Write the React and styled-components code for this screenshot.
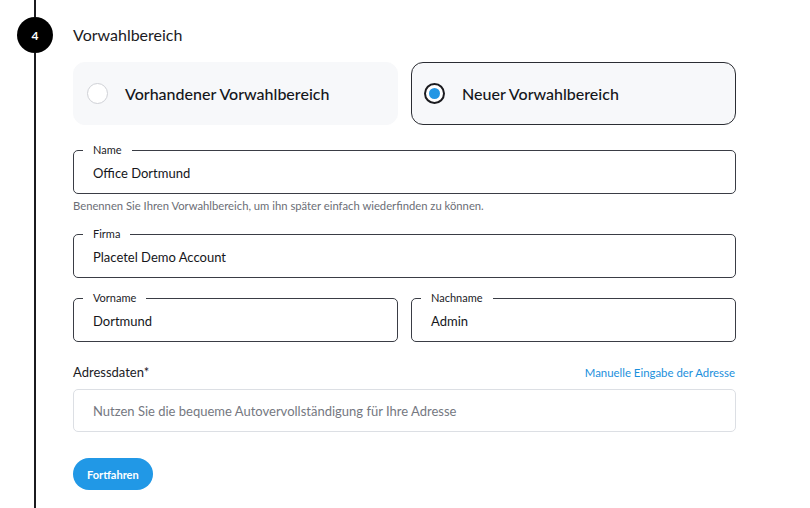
import styled, { createGlobalStyle } from "styled-components";

/* ===== GLOBAL ===== */

const Global = createGlobalStyle`
html, body {
margin:0;
padding:0;
background:#fff;
}
body{
font-family:Lato, "Open Sans", "Liberation Sans", sans-serif;
color:#1b1b1f;
}
`;

/* ===== LAYOUT ===== */

const Page = styled.div`
display:flex;
width:810px;
height:508px;
overflow:hidden;
`;

const Rail = styled.div`
width:70px;
display:flex;
flex-direction:column;
align-items:center;
`;

const RailLine = styled.div`
width:2px;
background:#1b1b1f;
height:${p => p.$h ? p.$h + "px" : "auto"};
flex:${p => p.$grow ? 1 : "none"};
`;

const StepBadge = styled.div`
width:36px;
height:36px;
border-radius:50%;
background:#000;
color:#fff;
font-size:12px;
font-weight:700;
display:flex;
align-items:center;
justify-content:center;
`;

const Content = styled.div`
width:663px;
margin-left:3px;
padding-top:24px;
display:flex;
flex-direction:column;
`;

const Title = styled.div`
font-size:16px;
line-height:22px;
color:#1b1b1f;
margin-bottom:16px;
`;

/* ===== OPTIONS ===== */

const Options = styled.div`
display:grid;
grid-template-columns:1fr 1fr;
gap:13px;
margin-bottom:25px;
`;

const Option = styled.div`
height:63px;
box-sizing:border-box;
border-radius:12px;
background:#f7f8fa;
border:1px solid ${p => p.$active ? "#2b2d33" : "#f7f8fa"};
display:flex;
align-items:center;
padding-left:${p => p.$active ? "12px" : "13px"};
gap:17px;
font-size:16px;
font-weight:500;
color:#15161a;
`;

const Radio = styled.span`
width:21px;
height:21px;
box-sizing:border-box;
border-radius:50%;
border:${p => p.$active ? "2px solid #1b1b1f" : "1.5px solid #cfd1d6"};
background:#fff;
display:flex;
align-items:center;
justify-content:center;

&::after{
content:"";
display:${p => p.$active ? "block" : "none"};
width:11px;
height:11px;
border-radius:50%;
background:#2396e4;
}
`;

/* ===== FIELDS ===== */

const Field = styled.div`
position:relative;
height:44px;
box-sizing:border-box;
border:1.5px solid #3a3d45;
border-radius:5px;
padding:0 19px;
display:flex;
align-items:center;
min-width:0;
`;

const FieldLabel = styled.span`
position:absolute;
top:-8px;
left:9px;
font-size:11px;
line-height:14px;
padding:0 10px;
background:#fff;
color:#1b1b1f;
`;

const Value = styled.div`
font-size:13px;
color:#15161a;
margin-top:2px;
`;

const Help = styled.div`
font-size:11.25px;
line-height:14px;
color:#6b6e76;
margin-top:5px;
margin-bottom:21px;
`;

const Row = styled.div`
display:grid;
grid-template-columns:1fr 1fr;
gap:13px;
margin-top:${p => p.$mt || 0}px;
`;

const AddressHead = styled.div`
display:flex;
justify-content:space-between;
align-items:flex-end;
margin-top:21px;
margin-bottom:8px;
`;

const AddressLabel = styled.div`
font-size:13px;
line-height:18px;
color:#1b1b1f;
`;

const ManualLink = styled.a`
font-size:11.4px;
line-height:14px;
color:#1b8fdc;
text-decoration:none;
margin-right:1px;
margin-bottom:1px;
`;

const AddressInput = styled.input`
height:43px;
box-sizing:border-box;
border:1px solid #dcdfe4;
border-radius:5px;
padding:0 19px;
font-family:inherit;
font-size:13px;
color:#1b1b1f;
outline:none;

&::placeholder{
color:#757881;
}
`;

const Button = styled.button`
align-self:flex-start;
margin-top:26px;
height:32px;
padding:0 14px;
border:none;
border-radius:16px;
background:#2198e6;
color:#fff;
font-family:inherit;
font-size:11px;
font-weight:700;
cursor:pointer;
`;

/* ===== COMPONENT ===== */

export default function App() {
    return (
        <Page>
            <Global />

            <Rail>
                <RailLine $h={17} />
                <StepBadge>4</StepBadge>
                <RailLine $grow />
            </Rail>

            <Content>
                <Title>Vorwahlbereich</Title>

                <Options>
                    <Option>
                        <Radio />
                        Vorhandener Vorwahlbereich
                    </Option>
                    <Option $active>
                        <Radio $active />
                        Neuer Vorwahlbereich
                    </Option>
                </Options>

                <Field>
                    <FieldLabel>Name</FieldLabel>
                    <Value>Office Dortmund</Value>
                </Field>
                <Help>Benennen Sie Ihren Vorwahlbereich, um ihn später einfach wiederfinden zu können.</Help>

                <Field>
                    <FieldLabel>Firma</FieldLabel>
                    <Value>Placetel Demo Account</Value>
                </Field>

                <Row $mt={20}>
                    <Field>
                        <FieldLabel>Vorname</FieldLabel>
                        <Value>Dortmund</Value>
                    </Field>
                    <Field>
                        <FieldLabel>Nachname</FieldLabel>
                        <Value>Admin</Value>
                    </Field>
                </Row>

                <AddressHead>
                    <AddressLabel>Adressdaten*</AddressLabel>
                    <ManualLink href="#">Manuelle Eingabe der Adresse</ManualLink>
                </AddressHead>

                <AddressInput placeholder="Nutzen Sie die bequeme Autovervollständigung für Ihre Adresse" />

                <Button>Fortfahren</Button>
            </Content>
        </Page>
    );
}
